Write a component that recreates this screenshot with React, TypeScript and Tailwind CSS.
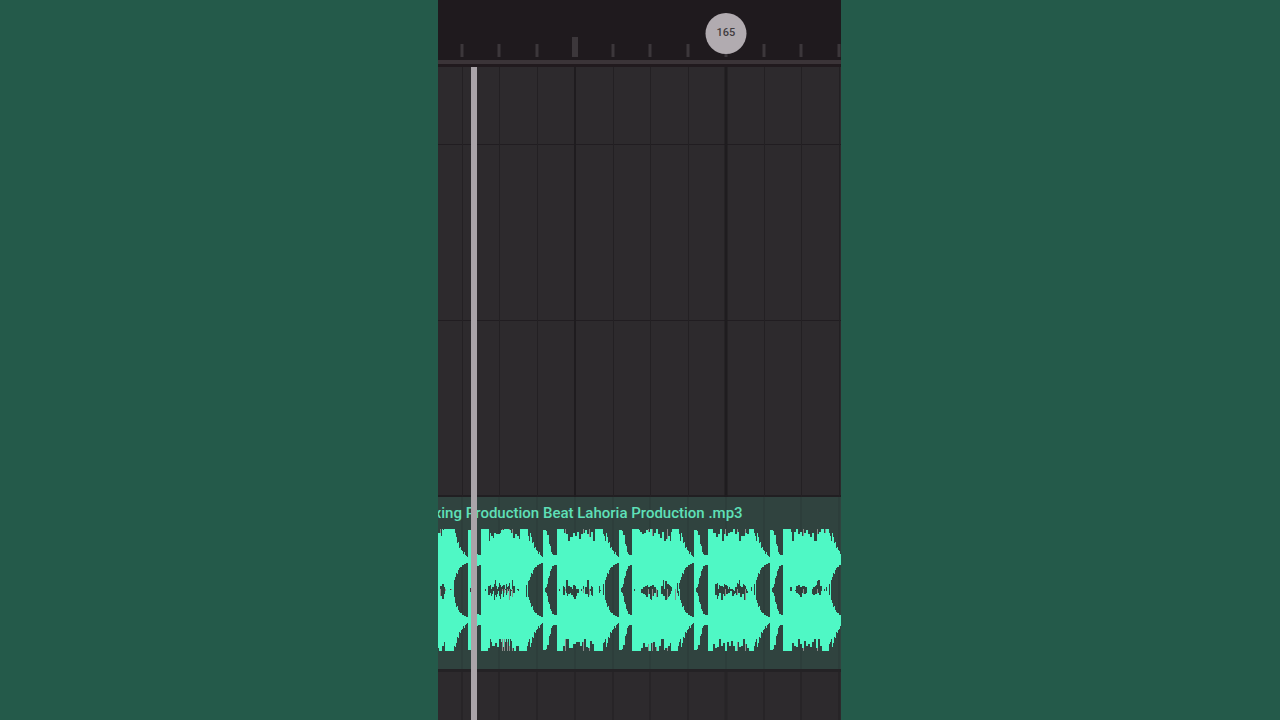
const BEAT_WIDTH = 9.36;
const FIRST_BEAT = 5.95;

// Eleven beats are visible, a half bar starts at 3 and a full bar at 7
const beats = Array.from({ length: 11 }, (_, i) => ({
  left: FIRST_BEAT + i * BEAT_WIDTH,
  kind: i === 7 ? "bar" : i === 3 ? "half" : "beat",
}));

const WAVE_WIDTH = 403;
const WAVE_PERIOD = 75.4;
const WAVE_START = 43 - WAVE_PERIOD;

// Peak level of each channel, one value per column after the loud part
const outerTail = [27, 23, 17, 18, 12, 13, 10, 9, 6, 8, 5, 4, 3, 30, 30, 30, 29, 25, 25, 16, 14, 8, 6, 5, 5, 5];
const innerTail = [17, 13, 14, 10, 8, 7, 7, 5, 5, 4, 4, 3, 3, 30, 30, 28, 27, 24, 18, 16, 11, 9, 6, 6, 5, 5];

// Depth of the notches in the loud part, one digit per column
const takes = [
  {
    top: "0000000044200099335544002222000033350100000000000",
    bottom: "0000000550033388442255000033399220004470000000004",
    upper: "0000000020001133004422110055332200446631100022009",
    lower: "0000000011002244113355220077441100668842000011007",
    grey: [30, 34, 39, 45],
  },
  {
    top: "0000000093557334444311100000113377445580000000059",
    bottom: "0000000229744466339979397979498220044400000000479",
    upper: "0000200445233694237534552634721944002201000005089",
    lower: "0000200553642957426842731532962733001201000007079",
    grey: [21, 23, 26, 28, 31],
  },
  {
    top: "0000000334499666335522884433114466229900000000459",
    bottom: "0000004499992222555777744779933228855000000000679",
    upper: "0020104319944332554222112040339902430001004100609",
    lower: "0020105523644355788633112030444752560001003200509",
    grey: [8, 26, 32],
  },
  {
    top: "0000000122443311220055330044772299885592000000049",
    bottom: "0000000002266333500667733004499912224460000000479",
    upper: "0020000102233445334455331100044928866543000207079",
    lower: "0020000103344577448966337722044669987642000903609",
    grey: [16, 20, 24, 35, 43],
  },
  {
    top: "0000033366440099445533222004422995555334400000359",
    bottom: "0000055223399446600774488440077334499552200000479",
    upper: "0000000667254443655423222103376943365420110300609",
    lower: "0000000558633994664433226643553377449933110200509",
    grey: [17, 29, 37],
  },
  {
    top: "0000000029922004422553311446633999442200033000359",
    bottom: "0000000006644339955228844553377992299440000000579",
    upper: "0000010330011445533444331100023345899441020310609",
    lower: "0000010220002334577344431100045544335521020210509",
    grey: [20, 34, 42],
  },
];

function column(x: number, height: number, y: number) {
  return `M${x} ${y}h1v${height}h-1z`;
}

function buildWave() {
  let green = "";
  let grey = "";

  for (let x = 0; x < WAVE_WIDTH; x++) {
    const beat = Math.floor((x - WAVE_START) / WAVE_PERIOD);
    const col = Math.floor(x - WAVE_START - beat * WAVE_PERIOD);
    const take = takes[beat];
    const loud = col < 49;
    const tail = Math.min(col - 49, outerTail.length - 1);
    const level = (digits: string, scale: number) =>
      31 - Math.round(Number(digits[col]) * scale);

    const outerTop = loud ? level(take.top, 1.3) : outerTail[tail];
    const outerBottom = loud ? level(take.bottom, 1.3) : outerTail[tail];
    const innerTop = loud ? level(take.upper, 1.2) : innerTail[tail];
    const innerBottom = loud ? level(take.lower, 1.2) : innerTail[tail];

    green += column(x, outerTop + innerTop, 31 - outerTop);
    green += column(x, innerBottom + outerBottom, 91 - innerBottom);

    if (take.grey.includes(col)) {
      grey += column(x, 31 - outerTop, 0);
      grey += column(x, 31 - outerBottom, 91 + outerBottom);
      grey += column(x, 31 - innerBottom, 60);
    }
  }

  return { green, grey };
}

const wave = buildWave();

export default function App() {
  return (
    <div className="flex min-h-screen bg-[#245a4a] font-['Roboto',sans-serif]">
      <div className="w-[34.2%]" />
      <main className="relative flex w-[31.5%] flex-col overflow-hidden bg-[#2d2a2d]">
        <Ruler />

        <div className="relative flex flex-1 flex-col">
          <div className="h-[78px] border-b border-[#211d21]" />
          <div className="h-44 border-b border-[#211d21]" />
          <div className="h-44 border-b-2 border-[#211f22]" />
          <AudioClip />
          <div className="flex-1 border-t-[3px] border-[#242225]" />

          <GridLines />

          {/* Playhead */}
          <div className="absolute inset-y-0 left-[8.2%] w-1.5 bg-[#aaa4a9]" />
        </div>
      </main>
    </div>
  );
}

function Ruler() {
  return (
    <header className="relative h-[67px] shrink-0 border-b-[3px] border-[#211a1e] bg-[#1f1a1e]">
      <div className="relative h-[60px]">
        {beats.map((beat) => (
          <span
            key={beat.left}
            className={`absolute bottom-[3px] -translate-x-1/2 bg-[#3c373b] ${
              beat.kind === "half" ? "h-5 w-1.5" : "h-[13px] w-[3px]"
            }`}
            style={{ left: `${beat.left}%` }}
          />
        ))}
        <span
          className="absolute top-[13px] flex size-[41px] -translate-x-1/2 items-center justify-center rounded-full bg-[#b1abb0] text-[11px] font-medium text-[#413c40]"
          style={{ left: `${beats[7].left}%` }}
        >
          165
        </span>
      </div>
      <div className="h-1 bg-[#3b3438]" />
    </header>
  );
}

function GridLines() {
  return (
    <div className="pointer-events-none absolute inset-0">
      {beats.map((beat) => (
        <span
          key={beat.left}
          className={`absolute top-0 h-[430px] ${
            beat.kind === "bar"
              ? "w-[3px] -translate-x-1/2 bg-[#1f1c1f]"
              : beat.kind === "half"
                ? "w-0.5 -translate-x-1/2 bg-[#1f1c1f]"
                : "w-px bg-[#232023]"
          }`}
          style={{ left: `${beat.left}%` }}
        />
      ))}
      {/* Next lane, below the clip */}
      {beats.map((beat) => (
        <span
          key={beat.left}
          className={`absolute top-[605px] bottom-0 -translate-x-1/2 bg-[#272427] ${
            beat.kind === "bar" ? "w-[3px]" : "w-0.5"
          }`}
          style={{ left: `${beat.left}%` }}
        />
      ))}
    </div>
  );
}

function AudioClip() {
  return (
    <section className="relative h-[172px] shrink-0 overflow-hidden bg-[#30433f]">
      {/* Faint grid behind the clip */}
      {beats.map((beat) => (
        <span
          key={beat.left}
          className="absolute inset-y-0 w-0.5 -translate-x-1/2 bg-[#2d3e3b]"
          style={{ left: `${beat.left}%` }}
        />
      ))}
      <h2 className="relative -ml-1 h-8 pt-1 text-[15px] leading-6 font-medium whitespace-nowrap text-[#5fe0b8]">
        xing Production Beat Lahoria Production .mp3
      </h2>
      <svg
        className="relative h-[123px] w-full"
        viewBox="0 0 403 123"
        preserveAspectRatio="none"
        shapeRendering="crispEdges"
        aria-hidden="true"
      >
        <path d={wave.green} fill="#4ff8c5" />
        <path d={wave.grey} fill="#8b8d8b" />
      </svg>
    </section>
  );
}
